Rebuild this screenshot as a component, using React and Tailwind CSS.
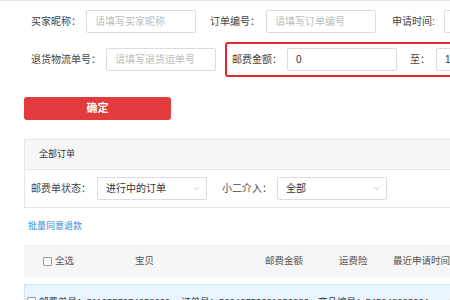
import { ChevronDown } from "lucide-react";

const FONT = { fontFamily: '"Liberation Sans", "Noto Sans CJK SC", sans-serif' };

function Field({ label, labelW, placeholder, value, className = "" }) {
  return (
    <div className={`flex items-center ${className}`}>
      <span className="text-[10px] text-[#444] whitespace-nowrap" style={{ width: labelW }}>{label}</span>
      <div className="w-[110px] h-[23px] border border-[#dcdcdc] rounded-[2px] flex items-center pl-[8px] bg-white">
        {value ? (
          <span className="text-[10px] text-[#333]">{value}</span>
        ) : (
          <span className="text-[10px] text-[#bdbdbd] whitespace-nowrap">{placeholder}</span>
        )}
      </div>
    </div>
  );
}

function Select({ label, labelW, value, className = "" }) {
  return (
    <div className={`flex items-center ${className}`}>
      <span className="text-[10px] text-[#444] whitespace-nowrap" style={{ width: labelW }}>{label}</span>
      <div className="w-[110px] h-[23px] border border-[#dcdcdc] rounded-[2px] flex items-center justify-between pl-[8px] pr-[5px] bg-white">
        <span className="text-[10px] text-[#333]">{value}</span>
        <ChevronDown size={9} className="text-[#b5b5b5]" />
      </div>
    </div>
  );
}

function Checkbox({ className = "" }) {
  return <span className={`inline-block w-[9px] h-[9px] border border-[#9a9a9a] rounded-[1px] bg-white ${className}`} />;
}

export default function App() {
  return (
    <div className="w-[450px] h-[300px] overflow-hidden bg-white border-t border-[#e2e2e2]" style={FONT}>
      <div className="w-[700px]">
        <div className="flex items-center pl-[31px] pt-[9px]">
          <Field label="买家昵称：" labelW={55} placeholder="请填写买家昵称" />
          <Field label="订单编号：" labelW={56} placeholder="请填写订单编号" className="ml-[14px]" />
          <Field label="申请时间:" labelW={52} placeholder="" className="ml-[16px]" />
        </div>

        <div className="flex items-center pl-[31px] mt-[9px]">
          <Field label="退货物流单号：" labelW={75} placeholder="请填写退货运单号" />
          <div className="ml-[9px] h-[35px] border-2 border-[#e3262c] rounded-[3px] flex items-center pl-[5px] pr-[20px]">
            <Field label="邮费金额：" labelW={55} value="0" />
            <Field label="至：" labelW={26} value="1000" className="ml-[13px]" />
          </div>
        </div>

        <div className="pl-[24px] mt-[18px]">
          <button className="w-[147px] h-[23px] rounded-[3px] bg-[#e23a3d] text-white text-[11px] font-bold">确定</button>
        </div>

        <div className="ml-[24px] mt-[19px] border border-[#e6e6e6]">
          <div className="h-[30px] bg-[#f7f7f7] border-b border-[#e6e6e6] flex items-center pl-[14px]">
            <span className="text-[9px] text-[#333]">全部订单</span>
          </div>
          <div className="flex items-center pl-[6px] pt-[7px] pb-[7px]">
            <Select label="邮费单状态：" labelW={66} value="进行中的订单" />
            <Select label="小二介入：" labelW={55} value="全部" className="ml-[15px]" />
          </div>
        </div>

        <div className="pl-[28px] mt-[13px] h-[12px] flex items-center">
          <span className="text-[9px] text-[#3a88d4]">批量同意退款</span>
        </div>

        <div className="ml-[24px] mt-[12px] h-[32px] bg-[#f6f6f6] border-t border-[#efefef] flex items-center text-[9.5px] text-[#555]">
          <div className="w-[111px] flex items-center pl-[19px]">
            <Checkbox />
            <span className="ml-[3px]">全选</span>
          </div>
          <span className="w-[130px]">宝贝</span>
          <span className="w-[74px]">邮费金额</span>
          <span className="w-[54px]">运费险</span>
          <span>最近申请时间 ⇅</span>
        </div>

        <div className="ml-[24px] mt-[7px] h-[40px] bg-[#eaf4fc] border border-[#cfe4f5] flex items-start pt-[10px] text-[9.5px] text-[#333]">
          <Checkbox className="ml-[2px] mt-[2px]" />
          <span className="ml-[3px] w-[142px] whitespace-nowrap">邮费单号：3110557074258609</span>
          <span className="w-[137px] whitespace-nowrap">订单号：56240755621250986</span>
          <span className="whitespace-nowrap">商品编号：545248223664</span>
          <span className="ml-[20px] whitespace-nowrap">创建时间</span>
        </div>
      </div>
    </div>
  );
}
